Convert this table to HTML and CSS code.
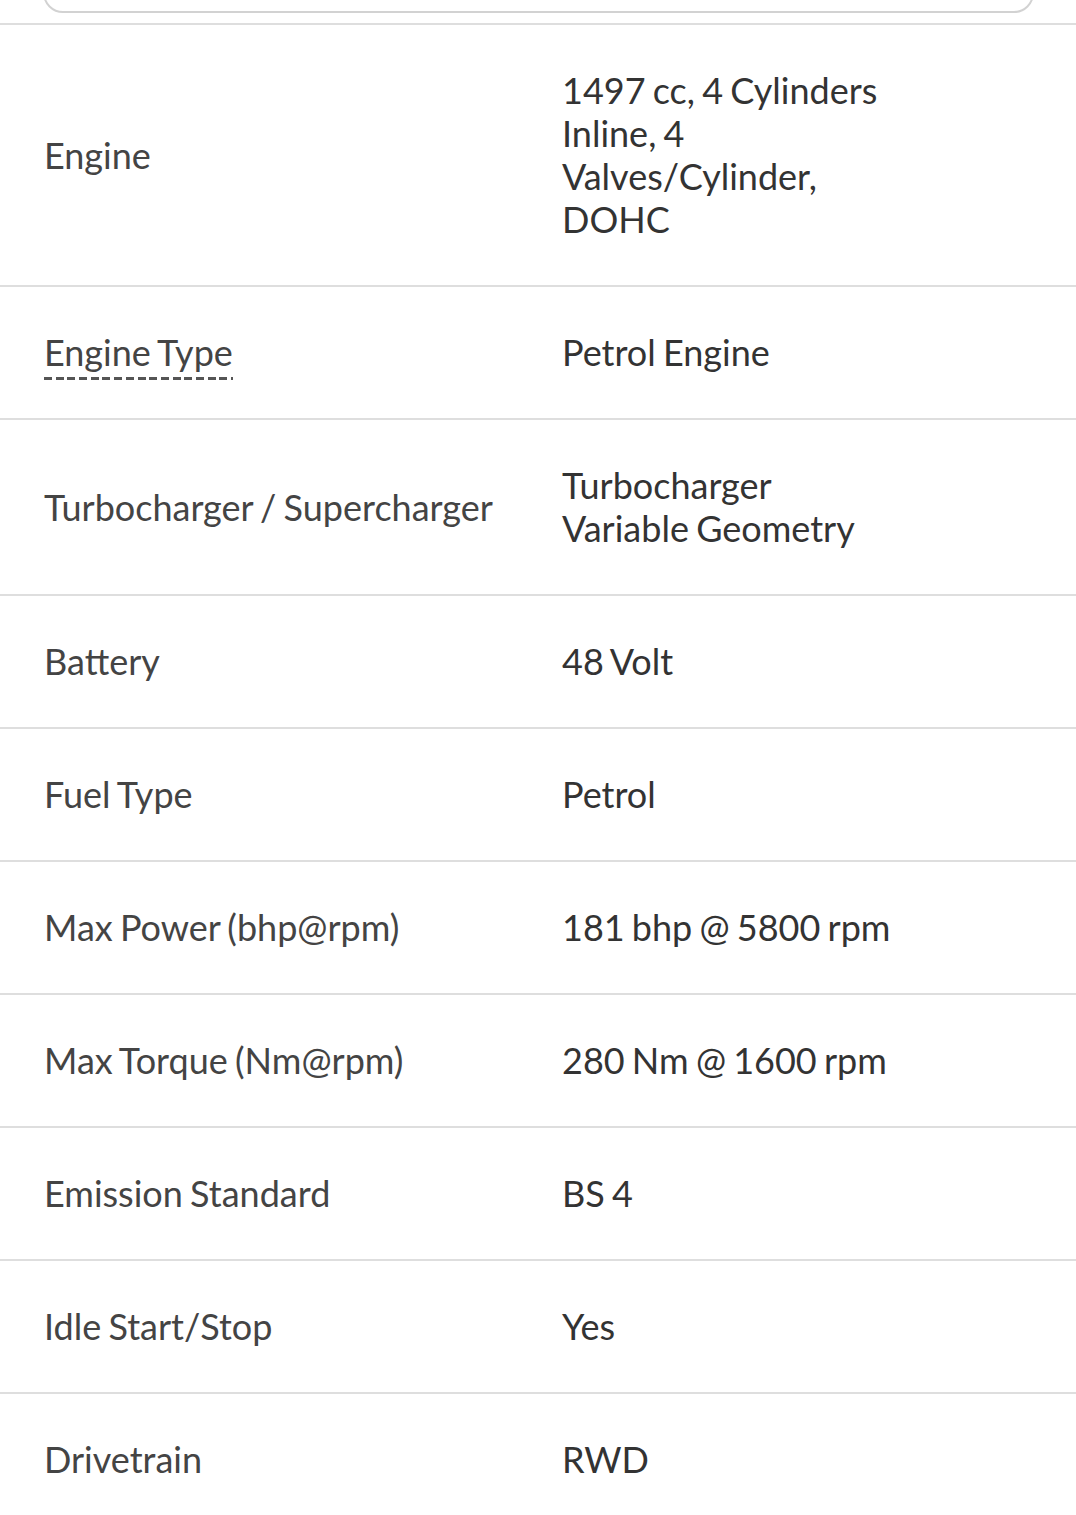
FILE: index.html
```html
<!DOCTYPE html>
<html>
<head>
<meta charset="utf-8">
<link rel="stylesheet" href="styles.css">
</head>
<body>
<div class="top">
  <div class="card"></div>
</div>
<div class="specs">
  <div class="row"><div class="label">Engine</div><div class="value">1497 cc, 4 Cylinders<br>Inline, 4<br>Valves/Cylinder,<br>DOHC</div></div>
  <div class="row"><div class="label"><span class="tip">Engine Type</span></div><div class="value">Petrol Engine</div></div>
  <div class="row"><div class="label">Turbocharger / Supercharger</div><div class="value">Turbocharger<br>Variable Geometry</div></div>
  <div class="row"><div class="label">Battery</div><div class="value">48 Volt</div></div>
  <div class="row"><div class="label">Fuel Type</div><div class="value">Petrol</div></div>
  <div class="row"><div class="label">Max Power (bhp@rpm)</div><div class="value">181 bhp @ 5800 rpm</div></div>
  <div class="row"><div class="label">Max Torque (Nm@rpm)</div><div class="value">280 Nm @ 1600 rpm</div></div>
  <div class="row"><div class="label">Emission Standard</div><div class="value">BS 4</div></div>
  <div class="row"><div class="label">Idle Start/Stop</div><div class="value">Yes</div></div>
  <div class="row last"><div class="label">Drivetrain</div><div class="value">RWD</div></div>
</div>
</body>
</html>
```

FILE: styles.css
```css
html, body {
  margin: 0;
  padding: 0;
  background: #fff;
}
body {
  font-family: Lato, "Open Sans", sans-serif;
  overflow: hidden;
}
.top {
  height: 23px;
  overflow: hidden;
  border-bottom: 2px solid #dedede;
}
.card {
  margin: -30px 42px 0 43px;
  height: 43px;
  border: 2px solid #d2d2d2;
  border-radius: 0 0 20px 20px;
  box-sizing: border-box;
}
.row {
  display: flex;
  align-items: center;
  padding: 44px 0;
  border-bottom: 2px solid #dedede;
  font-size: 36px;
  line-height: 43px;
  word-spacing: -2px;
}
.label {
  width: 518px;
  padding-left: 44px;
  box-sizing: border-box;
  color: #444;
}
.value {
  flex: 1;
  padding-left: 44px;
  color: #333;
}
.tip {
  display: inline-block;
  vertical-align: top;
  line-height: 43px;
  padding-bottom: 6px;
  margin-bottom: -6px;
  background-image: repeating-linear-gradient(to right, #555 0 8px, transparent 8px 11.7px);
  background-size: 100% 3px;
  background-position: left bottom;
  background-repeat: no-repeat;
}
```
